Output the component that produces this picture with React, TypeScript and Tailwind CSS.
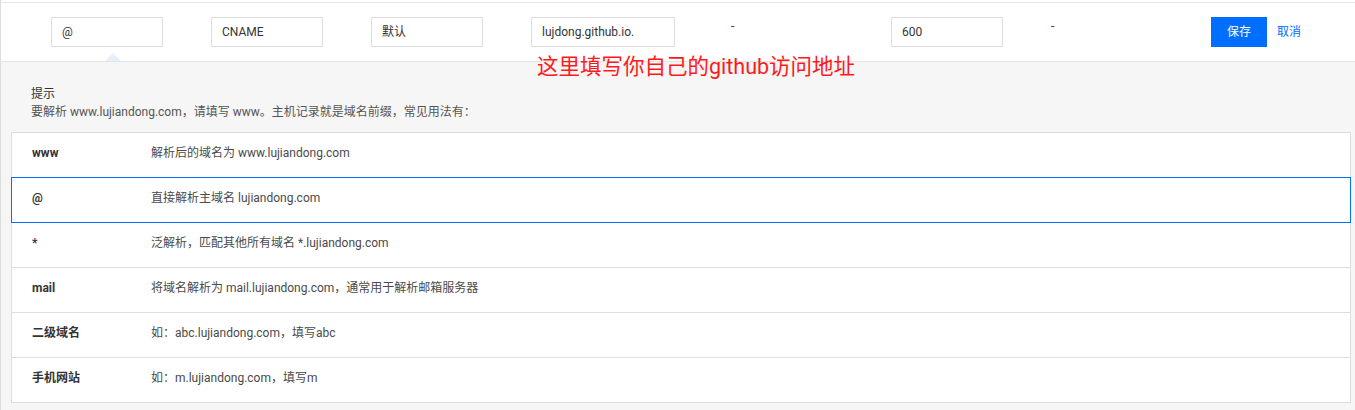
const rows = [
  { label: "www", desc: "解析后的域名为 www.lujiandong.com" },
  { label: "@", desc: "直接解析主域名 lujiandong.com", active: true },
  { label: "*", desc: "泛解析，匹配其他所有域名 *.lujiandong.com" },
  { label: "mail", desc: "将域名解析为 mail.lujiandong.com，通常用于解析邮箱服务器" },
  { label: "二级域名", desc: "如：abc.lujiandong.com，填写abc" },
  { label: "手机网站", desc: "如：m.lujiandong.com，填写m" },
];

function Field({ value, wide }: { value: string; wide?: boolean }) {
  return (
    <div
      className={`flex h-[30px] items-center border border-[#dddddd] bg-white px-[10px] text-[12px] text-[#333] ${
        wide ? "w-[144px]" : "w-[112px]"
      }`}
    >
      {value}
    </div>
  );
}

export default function App() {
  return (
    <div
      className="min-h-[410px] w-[1355px] border-l border-[#dddddd] bg-white pt-[2px]"
      style={{ fontFamily: '"Roboto", "Noto Sans CJK SC", sans-serif' }}
    >
      <div className="relative flex h-[60px] items-start border-y border-[#e5e5e5] pl-[50px] pt-[14px]">
        <div className="relative w-[160px]">
          <Field value="@" />
          <div className="absolute left-[54px] top-[36px] h-0 w-0 border-x-[8px] border-b-[8px] border-x-transparent border-b-[#e6eef9]" />
        </div>
        <div className="w-[160px]">
          <Field value="CNAME" />
        </div>
        <div className="w-[160px]">
          <Field value="默认" />
        </div>
        <div className="w-[200px]">
          <Field value="lujdong.github.io." wide />
        </div>
        <div className="w-[160px] text-[12px] leading-[18px] text-[#333]">-</div>
        <div className="w-[160px]">
          <Field value="600" />
        </div>
        <div className="w-[160px] text-[12px] leading-[18px] text-[#333]">-</div>
        <div className="flex items-center gap-[10px]">
          <button
            type="button"
            className="h-[30px] w-[56px] bg-[#006eff] text-[12px] text-white"
          >
            保存
          </button>
          <button type="button" className="text-[12px] text-[#006eff]">
            取消
          </button>
        </div>
        <div className="absolute left-[536px] top-[50px] z-10 text-[21.5px] leading-[28px] text-[#ff1a1a]">
          这里填写你自己的github访问地址
        </div>
      </div>

      <div className="bg-[#f6f6f6] pb-[8px] pl-[10px] pr-[4px] pt-[23px]">
        <div className="pl-[20px] text-[12px] leading-[18px]">
          <div className="text-[#333]">提示</div>
          <div className="text-[#555]">
            要解析 www.lujiandong.com，请填写 www。主机记录就是域名前缀，常见用法有：
          </div>
        </div>
        <div className="mt-[11px] flex flex-col">
          {rows.map((r, i) => (
            <div
              key={r.label}
              className={`flex h-[46px] items-center border bg-white pb-[4px] pl-[20px] text-[12px] ${
                i > 0 ? "-mt-px" : ""
              } ${r.active ? "relative z-10 border-[#006eff]" : "border-[#dddddd]"}`}
            >
              <div className="w-[119px] font-bold text-[#333]">{r.label}</div>
              <div className="text-[#4a4a4a]">{r.desc}</div>
            </div>
          ))}
        </div>
      </div>
    </div>
  );
}
